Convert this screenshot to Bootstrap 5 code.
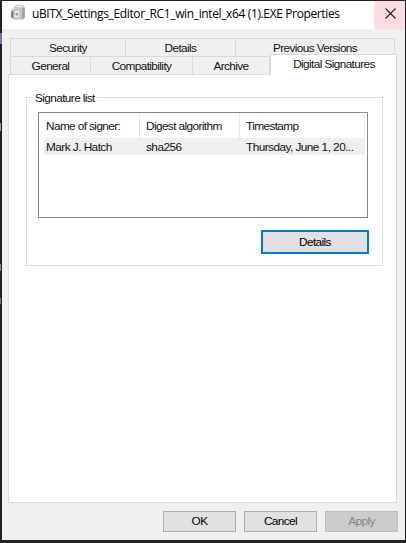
<!DOCTYPE html>
<html lang="en">
<head>
<meta charset="utf-8">
<meta name="viewport" content="width=device-width, initial-scale=1">
<title>Properties</title>
<link href="https://cdn.jsdelivr.net/npm/bootstrap@5.3.0/dist/css/bootstrap.min.css" rel="stylesheet">
<style>
body{width:406px;height:543px;background:linear-gradient(#667aa5,#667aa5) 0 33px/2px 11px no-repeat,linear-gradient(#999,#999) 0 123px/1px 8px no-repeat,linear-gradient(#888,#888) 0 264px/1px 7px no-repeat,linear-gradient(#777,#777) 0 298px/1px 6px no-repeat,#202225;font:11.8px/14px "Liberation Sans",Arial,sans-serif;letter-spacing:-.6px;color:#111;padding:1px 1px 3px 2px;white-space:nowrap}
.window{height:539px;background:#f0f0f0}
.titlebar{height:28px;background:#fff;font:12px/16px "Open Sans","Noto Sans",sans-serif;letter-spacing:-.37px;color:#000;padding-left:8px}
.app-icon{width:16px;height:18px;margin-top:3px}
.caption{margin:-2px 0 0 6px}
.close-btn{width:31px;height:28px;background:#fbdde1;border:0;padding:0 0 4px 1px}
.tab-area{padding:9px 8px 0 6px}
.tab-row{height:18px;margin:0 2px}
.tab-row .tab{border:1px solid #d9d9d9;border-width:1px 1px 0 0;height:18px;line-height:18px;text-align:center}
.tab-row .tab:first-child{border-left-width:1px}
.tab-row+.tab-row .tab{line-height:18px}
.tab-row+.tab-row .tab.selected{background:#fff;height:22px;margin:-2px -3px -1px 0;border-width:1px;border-bottom:0;line-height:19px;position:relative;padding-left:1px}
.w-a{width:116px}.w-b{width:110px}.w-c{width:159px}
.w-d{width:81px}.w-e{width:102px}.w-f{width:77px}.w-g{width:127px}
.page{height:429px;background:#fff;border:1px solid #d9d9d9;padding:15px 13px 0 17px}
.group{height:176px;padding-top:7px}
.group-box{height:169px;border:1px solid #dcdcdc;padding:0 14px 0 11px}
.legend-text{background:#fff;height:14px;margin:-7px 0 0 -5px;padding:0 2px 0 2px}
.list{height:106px;border:1px solid #828790;margin-top:7px;padding:0 2px 0 5px}
.cols{display:grid;grid-template-columns:96px 100px 1fr}
.heads{height:25px;line-height:26px}
.heads>div{border-right:1px solid #e5e5e5}
.cols>div{padding-left:6px}
.cols>div:first-child{padding-left:2px}
.entry{height:17px;line-height:18px;background:#efefef;letter-spacing:-.54px}
.push{background:#e1e1e1;border:1px solid #adadad;width:73px;height:21px;padding:0;font:inherit;letter-spacing:inherit;line-height:19px;color:#000}
.push.focused{width:108px;height:24px;border:2px solid #0078d0;margin:12px -1px 0 0}
.push:disabled{background:#ccc;border-color:#bfbfbf;color:#858585}
.actions{gap:8px;padding:8px 7px 0 0}
</style>
<script src="https://cdn.jsdelivr.net/npm/bootstrap@5.3.0/dist/js/bootstrap.bundle.min.js"></script>
</head>
<body class="overflow-hidden">
<main class="window">
<header class="titlebar d-flex">
<svg class="app-icon" viewBox="0 0 15 17"><path d="M4 3l3-2 6 1 1 2v9l-3 2-7-1z" fill="#d3d5df"/><path d="M4 3l3-2 6 1-2 2z" fill="#eceef2" stroke="#a9acba" stroke-width=".6"/><path d="M11 4l3-1v10l-3 2z" fill="#9da2b5"/><path d="M1 6l3-2 6 1v9l-5 1-4-2z" fill="#c6c5c5"/><path d="M4 6h5v7H4z" fill="#f3f2eb" stroke="#aaa" stroke-width=".5"/><path d="M1 7h2v6H1z" fill="#77766e"/><circle cx="6.5" cy="9.5" r="1.5" fill="#aaa48f"/></svg>
<div class="caption align-self-center"><span>uBITX_Settings_Editor_RC1_win_intel_x64 (1).EXE Properties</span></div>
<button class="close-btn ms-auto d-flex align-items-center justify-content-center" aria-label="Close"><svg width="11" height="11" viewBox="0 0 11 11"><path d="M.5.5l10 10M10.5.5l-10 10" stroke="#222" stroke-width="1.1"/></svg></button>
</header>
<section class="tab-area">
<div class="tab-row d-flex"><div class="tab w-a"><span>Security</span></div><div class="tab w-b"><span>Details</span></div><div class="tab w-c"><span>Previous Versions</span></div></div>
<div class="tab-row d-flex"><div class="tab w-d"><span>General</span></div><div class="tab w-e"><span>Compatibility</span></div><div class="tab w-f"><span>Archive</span></div><div class="tab w-g selected flex-shrink-0"><span>Digital Signatures</span></div></div>
<div class="page">
<div class="group"><div class="group-box">
<div class="legend-text d-table">Signature list</div>
<div class="list">
<div class="cols heads"><div>Name of signer:</div><div>Digest algorithm</div><div>Timestamp</div></div>
<div class="cols entry"><div>Mark J. Hatch</div><div>sha256</div><div>Thursday, June 1, 20...</div></div>
</div>
<div class="d-flex justify-content-end"><button class="push focused">Details</button></div>
</div></div>
</div>
</section>
<footer class="actions d-flex justify-content-end"><button class="push">OK</button><button class="push">Cancel</button><button class="push" disabled>Apply</button></footer>
</main>
</body>
</html>
